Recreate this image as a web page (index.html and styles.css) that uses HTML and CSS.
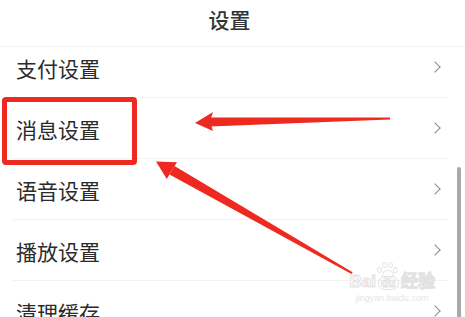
FILE: index.html
```html
<!DOCTYPE html>
<html lang="zh-CN">
<head>
  <meta charset="UTF-8" />
  <meta name="viewport" content="width=device-width, initial-scale=1.0" />
  <title>设置</title>
  <link rel="stylesheet" href="styles.css">
</head>
<body>
  <div class="screen">
    <div class="header">设置</div>

    <ul class="menu">
      <li class="row"><span>支付设置</span><i class="chev"></i></li>
      <li class="row"><span>消息设置</span><i class="chev"></i></li>
      <li class="row"><span>语音设置</span><i class="chev"></i></li>
      <li class="row"><span>播放设置</span><i class="chev"></i></li>
      <li class="row"><span>清理缓存</span><i class="chev"></i></li>
    </ul>

    <div class="scrollbar"></div>

    <!-- 标注：红框 + 箭头 -->
    <div class="mark-box"></div>
    <svg class="arrows" width="465" height="317" viewBox="0 0 465 317">
      <polygon points="390,117.6 390,119.6 210,126.5 210,117.5" />
      <polygon points="195,123 213,112 210,121.5 213,131" />
      <polygon points="351.5,274 352.6,272.2 174.5,166 169.5,174.5" />
      <polygon points="156,161.5 177,162.2 171.8,170.4 166.8,179" />
    </svg>

    <!-- 水印 -->
    <div class="watermark">
      <div class="paw">
        <b></b><b></b><b></b><b></b><em></em>
      </div>
      <div class="wm-logo">Bai<span class="wm-du">du</span>经验</div>
      <div class="wm-url">jingyan.baidu.com</div>
    </div>
  </div>
</body>
</html>
```

FILE: styles.css
```css
* {
  box-sizing: border-box;
}
body {
  margin: 0;
  background: #fff;
  font-family: "Noto Sans CJK SC", "Noto Sans", sans-serif;
  color: #2b2b2b;
}
.screen {
  position: relative;
  width: 465px;
  height: 317px;
  overflow: hidden;
  background: #fff;
}
.header {
  position: relative;
  z-index: 1;
  height: 47px;
  padding-right: 6px;
  display: flex;
  justify-content: center;
  align-items: center;
  padding-bottom: 9px;
  font-size: 21px;
  font-weight: 500;
  color: #333;
  background: #fff;
  border-bottom: 1px solid #f2f2f2;
}
.menu {
  list-style: none;
  margin: -10px 0 0;
  padding: 0;
}
.row {
  height: 61px;
  margin: 0 17px 0 12px;
  padding: 0 7px 0 4px;
  display: flex;
  align-items: center;
  justify-content: space-between;
  font-size: 21px;
  border-bottom: 1px solid #f2f2f2;
}
.row span {
  margin-top: 2px;
}
.chev {
  width: 8px;
  height: 8px;
  margin-right: 2px;
  border-top: 1.5px solid #8a8a8a;
  border-right: 1.5px solid #8a8a8a;
  transform: rotate(45deg);
}
.scrollbar {
  position: absolute;
  right: 4px;
  top: 167px;
  width: 4px;
  height: 160px;
  border-radius: 2px;
  background: #a9a9a9;
}
.mark-box {
  position: absolute;
  left: 2px;
  top: 97px;
  width: 135px;
  height: 68px;
  border: 5px solid #ec2a22;
  border-radius: 4px;
}
.arrows {
  position: absolute;
  left: 0;
  top: 0;
}
.arrows polygon {
  fill: #ee2a20;
}
.watermark {
  position: absolute;
  left: 347px;
  top: 262px;
  width: 90px;
  color: #eaeaea;
  text-align: center;
}
.paw {
  position: relative;
  width: 22px;
  height: 15px;
  margin: 0 auto -4px 30px;
}
.paw b {
  position: absolute;
  width: 5px;
  height: 6px;
  border: 1px solid #e6e6e6;
  border-radius: 50%;
}
.paw b:nth-child(1) { left: 0; top: 5px; }
.paw b:nth-child(2) { left: 5px; top: 0; }
.paw b:nth-child(3) { left: 11px; top: 0; }
.paw b:nth-child(4) { left: 16px; top: 5px; }
.paw em {
  position: absolute;
  left: 5px;
  top: 8px;
  width: 12px;
  height: 9px;
  border: 1px solid #e6e6e6;
  border-radius: 50%;
}
.wm-logo {
  font-family: "Liberation Sans", sans-serif;
  font-size: 17px;
  font-weight: bold;
  line-height: 18px;
  color: #fff;
  -webkit-text-stroke: 1px #e2e2e2;
  white-space: nowrap;
}
.wm-du {
  display: inline-block;
  margin: 0 2px;
  padding: 0 2px;
  font-size: 12px;
  border: 1px solid #e2e2e2;
  border-radius: 7px;
  line-height: 12px;
}
.wm-url {
  margin-top: 2px;
  font-family: "Liberation Sans", sans-serif;
  font-size: 9px;
  color: #e6e6e6;
  white-space: nowrap;
}
```
